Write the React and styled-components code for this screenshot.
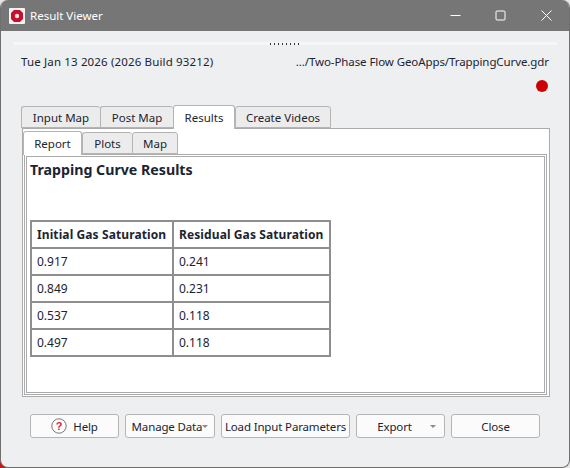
import React from 'react'
import styled, { createGlobalStyle } from 'styled-components'

const GlobalStyle = createGlobalStyle`
  html, body {
    margin: 0;
    padding: 0;
  }
  html {
    background: linear-gradient(#c81414, #c81414) no-repeat 0 100% / 8px 8px, #e6e6e6;
  }
  body {
    font-family: "Noto Sans", "Open Sans", sans-serif;
    font-size: 11.5px;
    color: #1c2430;
  }
`

const Window = styled.div`
  width: 570px;
  height: 468px;
  box-sizing: border-box;
  background: #eeeff1;
  border: 1px solid #6f6f6f;
  border-top: none;
  border-radius: 8px;
  overflow: hidden;
  display: flex;
  flex-direction: column;
`

const TitleBar = styled.div`
  height: 31px;
  flex: none;
  background: #767676;
  color: #fff;
  display: flex;
  align-items: center;
  padding-left: 8px;
`

const TitleText = styled.span`
  flex: 1;
  margin-left: 5px;
`

const WinButton = styled.div`
  width: 45.5px;
  height: 31px;
  display: flex;
  align-items: center;
  justify-content: center;
`

const Body = styled.div`
  flex: 1;
  display: flex;
  flex-direction: column;
  padding: 11px 20px 0 20px;
`

const Splitter = styled.div`
  height: 3px;
  margin: 0 -8px;
  background: #f6f6f7;
  display: flex;
  justify-content: center;
  align-items: center;
`

const Dots = styled.div`
  width: 30px;
  height: 2px;
  background: repeating-linear-gradient(90deg, #333 0 1px, transparent 1px 4px);
`

const InfoRow = styled.div`
  display: flex;
  justify-content: space-between;
  height: 17px;
  margin-top: 8px;
  line-height: 17px;
`

const BuildText = styled.span`
  letter-spacing: 0.15px;
`

const PathText = styled.span`
  letter-spacing: -0.09px;
`

const LedRow = styled.div`
  height: 12px;
  margin-top: 10px;
  display: flex;
  justify-content: flex-end;
  padding-right: 1px;
`

const Led = styled.div`
  width: 12px;
  height: 12px;
  border-radius: 50%;
  background: #cc0000;
`

const TabBar = styled.div`
  display: flex;
  align-items: flex-end;
  height: 24px;
  margin-top: 12px;
`

const Tab = styled.div`
  box-sizing: border-box;
  width: ${p => p.$w}px;
  height: ${p => (p.$active ? 24 : 22)}px;
  display: flex;
  align-items: center;
  justify-content: center;
  border: 1px solid #b4b4b4;
  border-right-width: ${p => (p.$active ? 1 : 0)}px;
  border-bottom: ${p => (p.$active ? 'none' : '1px solid #b4b4b4')};
  border-radius: 3px 3px 0 0;
  background: ${p => (p.$active ? '#fff' : '#ececec')};
  margin-bottom: ${p => (p.$active ? -1 : 0)}px;
  position: relative;
  z-index: ${p => (p.$active ? 1 : 0)};
  &:last-child {
    border-right-width: 1px;
  }
`

const Pane = styled.div`
  box-sizing: border-box;
  margin-left: 1px;
  width: 528px;
  height: 269px;
  background: #fff;
  border: 1px solid #ababab;
  padding: 2px 2px 1px 0;
  display: flex;
  flex-direction: column;
`

const SubTabBar = styled(TabBar)`
  height: 23px;
  margin-top: 0;
`

const Report = styled.div`
  box-sizing: border-box;
  flex: 1;
  margin-left: 1px;
  border: 1px solid #ababab;
  outline: 1px solid #ababab;
  outline-offset: -3px;
  padding: 5px 5px;
`

const Heading = styled.h1`
  margin: 0;
  font-size: 14.2px;
  line-height: 20px;
  font-weight: 700;
`

const Table = styled.table`
  margin-top: 40px;
  border-collapse: collapse;
  border: 2px solid #8e8e8e;
  table-layout: fixed;
  width: 299px;
`

const Th = styled.th`
  height: 25px;
  padding: 0 0 0 5px;
  text-align: left;
  font-size: 12px;
  font-weight: 700;
  letter-spacing: 0.1px;
  border: 2px solid #8e8e8e;
  white-space: nowrap;
`

const Td = styled.td`
  height: 25px;
  padding: 0 0 0 5px;
  font-size: 12px;
  border: 2px solid #8e8e8e;
`

const Footer = styled.div`
  display: flex;
  gap: 6px;
  margin-top: 17px;
  padding-left: 9px;
`

const Button = styled.div`
  box-sizing: border-box;
  width: ${p => p.$w}px;
  height: 24px;
  padding-right: ${p => p.$pr || 0}px;
  border: 1px solid #b5b5b5;
  border-radius: 3px;
  background: #fbfbfb;
  display: flex;
  align-items: center;
  justify-content: center;
  gap: 6px;
  letter-spacing: -0.15px;
  position: relative;
  white-space: nowrap;
`

const Caret = styled.span`
  width: 0;
  height: 0;
  border-left: 3.5px solid transparent;
  border-right: 3.5px solid transparent;
  border-top: 3.5px solid #8a8a8a;
`

const ExportCaret = styled(Caret)`
  position: absolute;
  right: 8px;
  top: 10px;
`

const ManageCaret = styled(Caret)`
  margin-left: -6px;
`

const HelpIcon = () => (
  <svg width="16" height="16" viewBox="0 0 16 16">
    <circle cx="8" cy="8" r="7.2" fill="#fff" stroke="#777" strokeWidth="1" />
    <text x="8" y="12" textAnchor="middle" fontSize="11" fontWeight="700" fill="#e0243c" fontFamily="Liberation Sans, sans-serif">?</text>
  </svg>
)

const AppIcon = () => (
  <svg width="16" height="16" viewBox="0 0 16 16">
    <rect width="16" height="16" rx="1" fill="#f4f4f4" />
    <polygon points="5,2 11,2 14,5 14,11 11,14 5,14 2,11 2,5" fill="#c8102e" />
    <circle cx="8" cy="8" r="2.2" fill="#f4e4e4" />
  </svg>
)

const rows = [
  ['0.917', '0.241'],
  ['0.849', '0.231'],
  ['0.537', '0.118'],
  ['0.497', '0.118'],
]

export default function App() {
  return (
    <>
      <GlobalStyle />
      <Window>
        <TitleBar>
          <AppIcon />
          <TitleText>Result Viewer</TitleText>
          <WinButton>
            <svg width="11" height="11" viewBox="0 0 11 11"><path d="M0.5 5.5h10" stroke="#fff" /></svg>
          </WinButton>
          <WinButton>
            <svg width="11" height="11" viewBox="0 0 11 11"><rect x="1" y="1" width="9" height="9" rx="1" fill="none" stroke="#fff" /></svg>
          </WinButton>
          <WinButton>
            <svg width="11" height="11" viewBox="0 0 11 11"><path d="M0.5 0.5l10 10M10.5 0.5l-10 10" stroke="#fff" /></svg>
          </WinButton>
        </TitleBar>
        <Body>
          <Splitter><Dots /></Splitter>
          <InfoRow>
            <BuildText>Tue Jan 13 2026 (2026 Build 93212)</BuildText>
            <PathText>.../Two-Phase Flow GeoApps/TrappingCurve.gdr</PathText>
          </InfoRow>
          <LedRow><Led /></LedRow>
          <TabBar>
            <Tab $w={79}>Input Map</Tab>
            <Tab $w={73}>Post Map</Tab>
            <Tab $w={62} $active>Results</Tab>
            <Tab $w={96}>Create Videos</Tab>
          </TabBar>
          <Pane>
            <SubTabBar>
              <Tab $w={59} $active>Report</Tab>
              <Tab $w={50}>Plots</Tab>
              <Tab $w={46}>Map</Tab>
            </SubTabBar>
            <Report>
              <Heading>Trapping Curve Results</Heading>
              <Table>
                <colgroup>
                  <col width="142" />
                  <col width="157" />
                </colgroup>
                <thead>
                  <tr>
                    <Th>Initial Gas Saturation</Th>
                    <Th>Residual Gas Saturation</Th>
                  </tr>
                </thead>
                <tbody>
                  {rows.map(r => (
                    <tr key={r[0]}>
                      <Td>{r[0]}</Td>
                      <Td>{r[1]}</Td>
                    </tr>
                  ))}
                </tbody>
              </Table>
            </Report>
          </Pane>
          <Footer>
            <Button $w={89}><HelpIcon /> Help</Button>
            <Button $w={90}>Manage Data <ManageCaret /></Button>
            <Button $w={129}>Load Input Parameters</Button>
            <Button $w={89} $pr={12}>Export<ExportCaret /></Button>
            <Button $w={89}>Close</Button>
          </Footer>
        </Body>
      </Window>
    </>
  )
}
